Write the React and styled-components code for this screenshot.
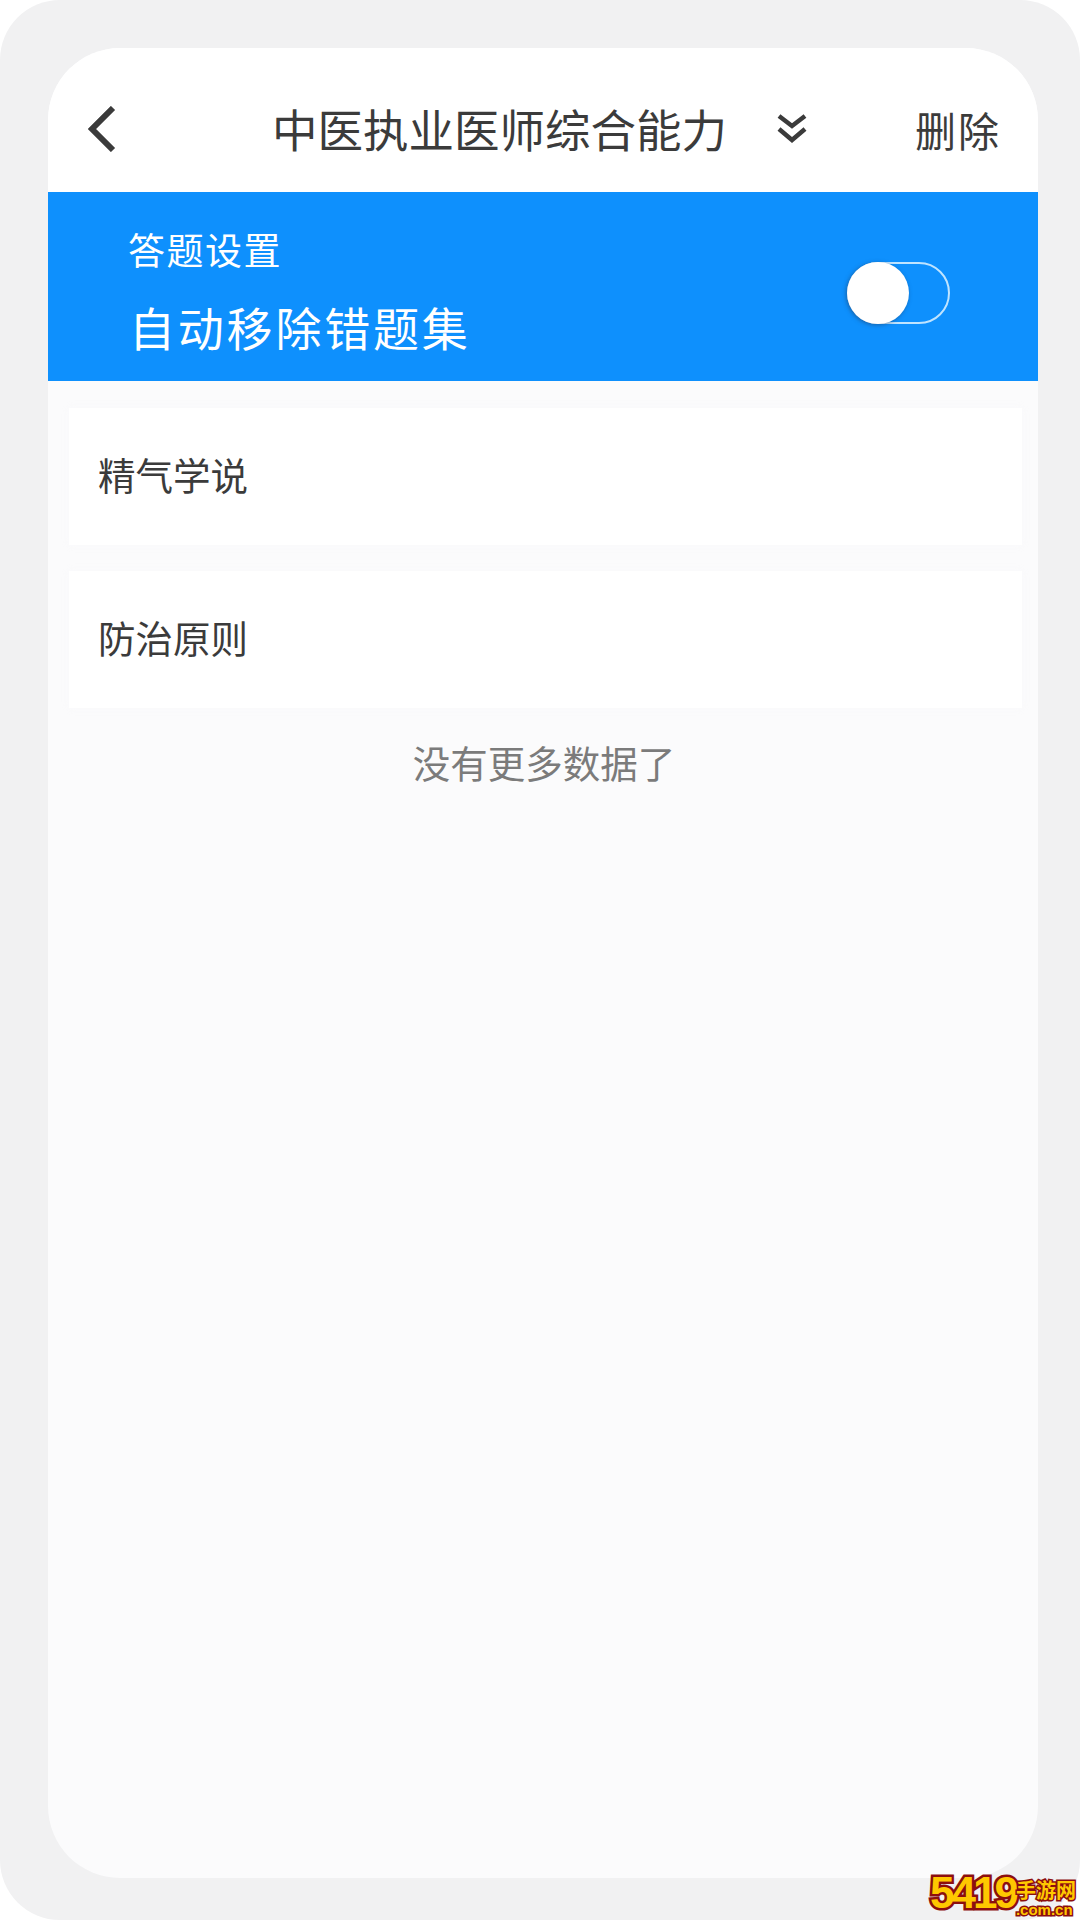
import React from 'react';
import styled, { createGlobalStyle } from 'styled-components';

const GlobalStyle = createGlobalStyle`
  html, body {
    margin: 0;
    padding: 0;
    background: #fff;
  }
  body {
    font-family: "Noto Sans CJK SC", "Noto Sans", sans-serif;
  }
`;

const Frame = styled.div`
  position: relative;
  box-sizing: border-box;
  width: 1080px;
  height: 1920px;
  padding: 48px 42px 42px 48px;
  background: #f1f1f2;
  border-radius: 60px;
`;

const Screen = styled.div`
  display: flex;
  flex-direction: column;
  height: 100%;
  background: #fbfbfc;
  border-radius: 72px;
  overflow: hidden;
`;

const Header = styled.header`
  display: flex;
  align-items: center;
  box-sizing: border-box;
  height: 144px;
  flex-shrink: 0;
  padding: 18px 37px 0 40px;
  background: #fff;
  color: #3b3b3b;
`;

const BackIcon = styled.svg`
  width: 30px;
  height: 46px;
  margin-right: 154px;
  flex-shrink: 0;
`;

const Title = styled.h1`
  margin: 0;
  font-size: 45.5px;
  font-weight: 400;
  line-height: 1;
  white-space: nowrap;
`;

const ChevronIcon = styled.svg`
  width: 32px;
  height: 32px;
  margin-left: 49px;
  flex-shrink: 0;
`;

const DeleteAction = styled.span`
  margin-left: auto;
  font-size: 41px;
  letter-spacing: 2px;
  line-height: 1;
`;

const SettingsBar = styled.section`
  display: flex;
  align-items: center;
  justify-content: space-between;
  flex-shrink: 0;
  box-sizing: border-box;
  height: 189px;
  padding: 0 88px 0 80px;
  background: #0e90fd;
  color: #fff;
`;

const SettingsText = styled.div`
  display: flex;
  flex-direction: column;
  gap: 35px;
  margin-top: 7px;
`;

const SettingsLabel = styled.span`
  font-size: 37px;
  letter-spacing: 1.5px;
  line-height: 1;
`;

const SettingsValue = styled.span`
  margin-left: 1px;
  font-size: 46px;
  letter-spacing: 2.8px;
  line-height: 1;
`;

const Toggle = styled.div`
  position: relative;
  box-sizing: border-box;
  width: 103px;
  height: 62px;
  margin-top: 12px;
  border: 2px solid #bfe4ff;
  border-radius: 31px;
`;

const ToggleKnob = styled.span`
  position: absolute;
  top: -2px;
  left: -2px;
  width: 62px;
  height: 62px;
  border-radius: 50%;
  background: #fff;
  box-shadow: -1px 1px 4px rgba(30, 60, 100, 0.55);
`;

const List = styled.div`
  display: flex;
  flex-direction: column;
  gap: 26px;
  padding: 27px 16px 0 21px;
`;

const Card = styled.div`
  display: flex;
  align-items: center;
  box-sizing: border-box;
  height: 137px;
  padding: 0 0 5px 29px;
  background: #fff;
  box-shadow: 0 0 8px rgba(250, 250, 252, 0.9);
  color: #3b3b3b;
  font-size: 37.5px;
  line-height: 1;
`;

const EndNote = styled.div`
  margin-top: 35px;
  padding-left: 2px;
  text-align: center;
  color: #7b7b7b;
  font-size: 37.5px;
  line-height: 1;
`;

const Watermark = styled.div`
  position: absolute;
  right: 0;
  bottom: 2px;
  display: flex;
  align-items: flex-end;
  width: 150px;
  height: 52px;
  font-family: "Liberation Sans", "Noto Sans CJK SC", sans-serif;
  font-weight: 700;
  color: #ffc800;
  paint-order: stroke fill;
`;

const WatermarkDigits = styled.span`
  font-size: 44px;
  letter-spacing: -3px;
  line-height: 50px;
  -webkit-text-stroke: 5px #8c0f0f;
`;

const WatermarkSite = styled.div`
  display: flex;
  flex-direction: column;
  align-items: flex-start;
  -webkit-text-stroke: 3px #8c0f0f;
`;

const WatermarkName = styled.span`
  font-size: 20px;
  line-height: 22px;
  white-space: nowrap;
`;

const WatermarkDomain = styled.span`
  font-size: 15px;
  line-height: 16px;
  white-space: nowrap;
`;

export default function App() {
  return (
    <>
      <GlobalStyle />
      <Frame>
        <Screen>
          <Header>
            <BackIcon viewBox="0 0 30 46" fill="none" stroke="#3b3b3b" strokeWidth="6">
              <path d="M25 2 L4 23 L25 44" />
            </BackIcon>
            <Title>中医执业医师综合能力</Title>
            <ChevronIcon viewBox="0 0 32 32" fill="none" stroke="#3b3b3b" strokeWidth="4.5">
              <path d="M3 3 L16 13 L29 3" />
              <path d="M3 16 L16 27 L29 16" />
            </ChevronIcon>
            <DeleteAction>删除</DeleteAction>
          </Header>
          <SettingsBar>
            <SettingsText>
              <SettingsLabel>答题设置</SettingsLabel>
              <SettingsValue>自动移除错题集</SettingsValue>
            </SettingsText>
            <Toggle>
              <ToggleKnob />
            </Toggle>
          </SettingsBar>
          <List>
            <Card>精气学说</Card>
            <Card>防治原则</Card>
          </List>
          <EndNote>没有更多数据了</EndNote>
        </Screen>
        <Watermark>
          <WatermarkDigits>5419</WatermarkDigits>
          <WatermarkSite>
            <WatermarkName>手游网</WatermarkName>
            <WatermarkDomain>.com.cn</WatermarkDomain>
          </WatermarkSite>
        </Watermark>
      </Frame>
    </>
  );
}
